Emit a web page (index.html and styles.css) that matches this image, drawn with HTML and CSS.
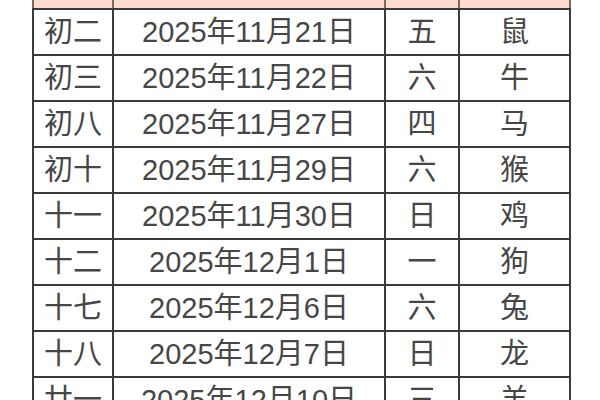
FILE: index.html
```html
<!DOCTYPE html>
<html lang="zh">
<head>
<meta charset="utf-8">
<link rel="stylesheet" href="styles.css">
</head>
<body>
<table class="cal">
  <colgroup>
    <col class="c1"><col class="c2"><col class="c3"><col class="c4">
  </colgroup>
  <tr class="head"><td>农历</td><td>公历</td><td>星期</td><td>生肖</td></tr>
  <tr><td>初二</td><td>2025年11月21日</td><td>五</td><td>鼠</td></tr>
  <tr><td>初三</td><td>2025年11月22日</td><td>六</td><td>牛</td></tr>
  <tr><td>初八</td><td>2025年11月27日</td><td>四</td><td>马</td></tr>
  <tr><td>初十</td><td>2025年11月29日</td><td>六</td><td>猴</td></tr>
  <tr><td>十一</td><td>2025年11月30日</td><td>日</td><td>鸡</td></tr>
  <tr><td>十二</td><td>2025年12月1日</td><td>一</td><td>狗</td></tr>
  <tr><td>十七</td><td>2025年12月6日</td><td>六</td><td>兔</td></tr>
  <tr><td>十八</td><td>2025年12月7日</td><td>日</td><td>龙</td></tr>
  <tr><td>廿一</td><td>2025年12月10日</td><td>三</td><td>羊</td></tr>
</table>
</body>
</html>
```
FILE: styles.css
```css
html, body {
  margin: 0;
  padding: 0;
  background: #ffffff;
  overflow: hidden;
}
.cal {
  border-collapse: collapse;
  margin: -38px 0 0 32px;
  table-layout: fixed;
  width: 537px;
  font-family: "Liberation Sans", "Noto Sans CJK SC", sans-serif;
  font-size: 29px;
  color: #464646;
}
.c1 { width: 80px; }
.c2 { width: 272px; }
.c3 { width: 74px; }
.c4 { width: 111px; }
.cal td {
  border: 2px solid #3a3a3a;
  height: 44px;
  padding: 0;
  text-align: center;
  vertical-align: middle;
  line-height: 1;
}
.cal .head td {
  background: #fbdccc;
  border-color: #7a6a62;
  border-bottom-color: #3a3a3a;
}
```
